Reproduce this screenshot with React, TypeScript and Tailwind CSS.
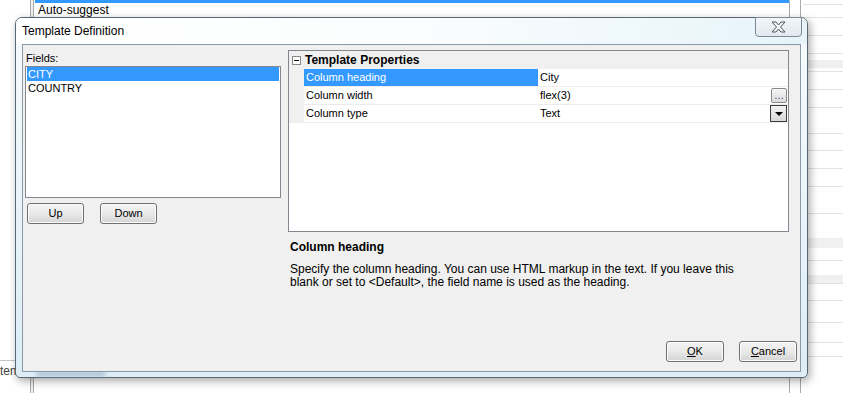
const rows = [
  { name: 'Column heading', value: 'City', selected: true, btn: '' },
  { name: 'Column width', value: 'flex(3)', selected: false, btn: 'dots' },
  { name: 'Column type', value: 'Text', selected: false, btn: 'drop' },
]

const bgLines = [4, 17, 35, 53, 71, 89, 107, 133, 150, 168, 186, 213, 238, 260, 283, 300, 322, 342, 356]

function WinButton({ children, className = '' }: { children: React.ReactNode; className?: string }) {
  return (
    <button
      className={
        'h-[21px] w-[57px] rounded-[3px] border border-[#707070] bg-linear-to-b from-[#f4f4f4] via-[#e9e9e9] to-[#d4d4d4] text-[11px] leading-none text-black shadow-[inset_0_0_0_1px_#fcfcfc] ' +
        className
      }
    >
      {children}
    </button>
  )
}

function CloseGlyph() {
  return (
    <svg width="15" height="12" viewBox="0 0 15 12">
      <path
        d="M1 1 H5 L7.5 4 L10 1 H14 L9.5 6 L14 11 H10 L7.5 8 L5 11 H1 L5.5 6 Z"
        fill="#f4f6f8"
        stroke="#4d5560"
        strokeWidth="1"
        strokeLinejoin="round"
      />
    </svg>
  )
}

export default function App() {
  return (
    <div className="relative h-[393px] w-[843px] overflow-hidden bg-white font-['Liberation_Sans',Arial,sans-serif] text-black">
      {/* window behind */}
      <div className="absolute left-[30px] top-0 bottom-0 w-[4px] border-x border-[#a9a9a9] bg-[#f0f0f0]" />
      <div className="absolute left-[35px] top-0 h-[3px] w-[754px] bg-[#3399ff]" />
      <div className="absolute left-[38px] top-[3px] text-[12px] leading-[15px]">Auto-suggest</div>
      <div className="absolute left-[789px] top-0 bottom-0 w-[12px] border-x border-[#a9a9a9] bg-white" />
      <div className="absolute left-[803px] right-0 top-0 bottom-0">
        {bgLines.map((y) => (
          <div key={y} className="absolute left-0 right-0 h-px bg-[#e3e3e3]" style={{ top: y }} />
        ))}
        <div className="absolute left-0 right-0 top-[60px] h-[8px] bg-[#f0f0f0]" />
        <div className="absolute left-0 right-0 top-[238px] h-[10px] bg-[#f0f0f0]" />
        <div className="absolute left-0 right-0 top-[275px] h-[8px] bg-[#f0f0f0]" />
      </div>
      <div className="absolute left-0 top-[360px] h-px w-[20px] bg-[#c8c8c8]" />
      <div className="absolute left-0 top-[364px] text-[12px] leading-[15px] text-[#444]">tem</div>

      {/* dialog */}
      <div className="absolute left-[15px] top-[17px] flex h-[361px] w-[793px] flex-col rounded-t-[7px] rounded-b-[5px] border border-[#5b6770] bg-linear-to-b from-[#f7fbfd] to-[#dcedf6] px-[6px] pb-[5px] shadow-[2px_3px_8px_rgba(0,0,0,0.35)]">
        <div className="relative -mx-[6px] flex h-[26px] items-center rounded-t-[6px] bg-linear-to-r from-white via-[#fbfdfe] to-[#e6f4fa] px-[6px]">
          <span className="text-[12px] text-black">Template Definition</span>
          <div className="absolute left-[739px] -top-px flex h-[20px] w-[47px] items-center justify-center rounded-b-[4px] border border-[#7c8a97] bg-linear-to-b from-[#f3f6f9] to-[#e2e9ef]">
            <CloseGlyph />
          </div>
        </div>

        {/* glass blur on the lower frame */}
        <div className="absolute bottom-[1px] left-[20px] h-[4px] w-[70px] rounded-full bg-[#8fa3c2] opacity-70 blur-[2px]" />

        {/* client area */}
        <div className="relative flex flex-1 flex-col border border-[#8a99a6] bg-[#f0f0f0] pl-[2px] pr-[3px] pt-[5px] pb-[9px] text-[11px]">
          <div className="flex gap-[7px]">
            {/* fields */}
            <div className="flex w-[256px] flex-col">
              <div className="mt-px h-[14px] pl-px leading-[14px]">Fields:</div>
              <div className="mt-px h-[132px] border border-[#828790] bg-white px-px">
                <div className="h-[14px] bg-[#3399ff] pl-px leading-[14px] text-white">CITY</div>
                <div className="h-[14px] pl-px leading-[14px]">COUNTRY</div>
              </div>
              <div className="mt-[5px] flex gap-[16px] pl-[2px]">
                <WinButton>Up</WinButton>
                <WinButton>Down</WinButton>
              </div>
            </div>

            {/* property grid + description */}
            <div className="flex w-[501px] flex-col">
              <div className="h-[182px] border border-[#828790] bg-white">
                <div className="flex h-[18px] items-center bg-[#f0f0f0]">
                  <div className="flex w-[15px] justify-center">
                    <div className="flex h-[9px] w-[9px] items-center justify-center border border-[#8a8a8a] bg-white">
                      <div className="h-px w-[5px] bg-black" />
                    </div>
                  </div>
                  <span className="pl-px text-[12px] font-bold">Template Properties</span>
                </div>
                {rows.map((r) => (
                  <div key={r.name} className="flex h-[18px]">
                    <div className="w-[15px] bg-[#f0f0f0]" />
                    <div
                      className={
                        'flex w-[234px] items-center border-b border-[#ececec] pl-[2px] ' +
                        (r.selected ? 'bg-[#3399ff] text-white' : '')
                      }
                    >
                      {r.name}
                    </div>
                    <div className="flex flex-1 items-center justify-between border-b border-[#ececec] pl-[2px] pr-px">
                      <span>{r.value}</span>
                      {r.btn === 'dots' && (
                        <div className="flex h-[15px] w-[16px] items-center justify-center rounded-[2px] border border-[#8a8a8a] bg-linear-to-b from-[#f6f6f6] to-[#dcdcdc] text-[10px] leading-none text-[#333366]">
                          …
                        </div>
                      )}
                      {r.btn === 'drop' && (
                        <div className="flex h-[17px] w-[17px] items-center justify-center border border-[#3c3c3c] bg-linear-to-b from-[#f2f2f2] to-[#d8d8d8]">
                          <div className="h-0 w-0 border-x-[4px] border-t-[4px] border-x-transparent border-t-black" />
                        </div>
                      )}
                    </div>
                  </div>
                ))}
              </div>
              <div className="mt-[8px] pl-[2px] text-[12px] font-bold leading-[14px]">Column heading</div>
              <p className="mt-[9px] pl-[2px] text-[12px] leading-[13px]">
                Specify the column heading. You can use HTML markup in the text. If you leave this
                <br />
                blank or set to &lt;Default&gt;, the field name is used as the heading.
              </p>
            </div>
          </div>

          <div className="mt-auto flex justify-end gap-[15px]">
            <WinButton className="w-[58px]">
              <span className="underline">O</span>K
            </WinButton>
            <WinButton className="w-[58px]">
              <span className="underline">C</span>ancel
            </WinButton>
          </div>
        </div>
      </div>
    </div>
  )
}
